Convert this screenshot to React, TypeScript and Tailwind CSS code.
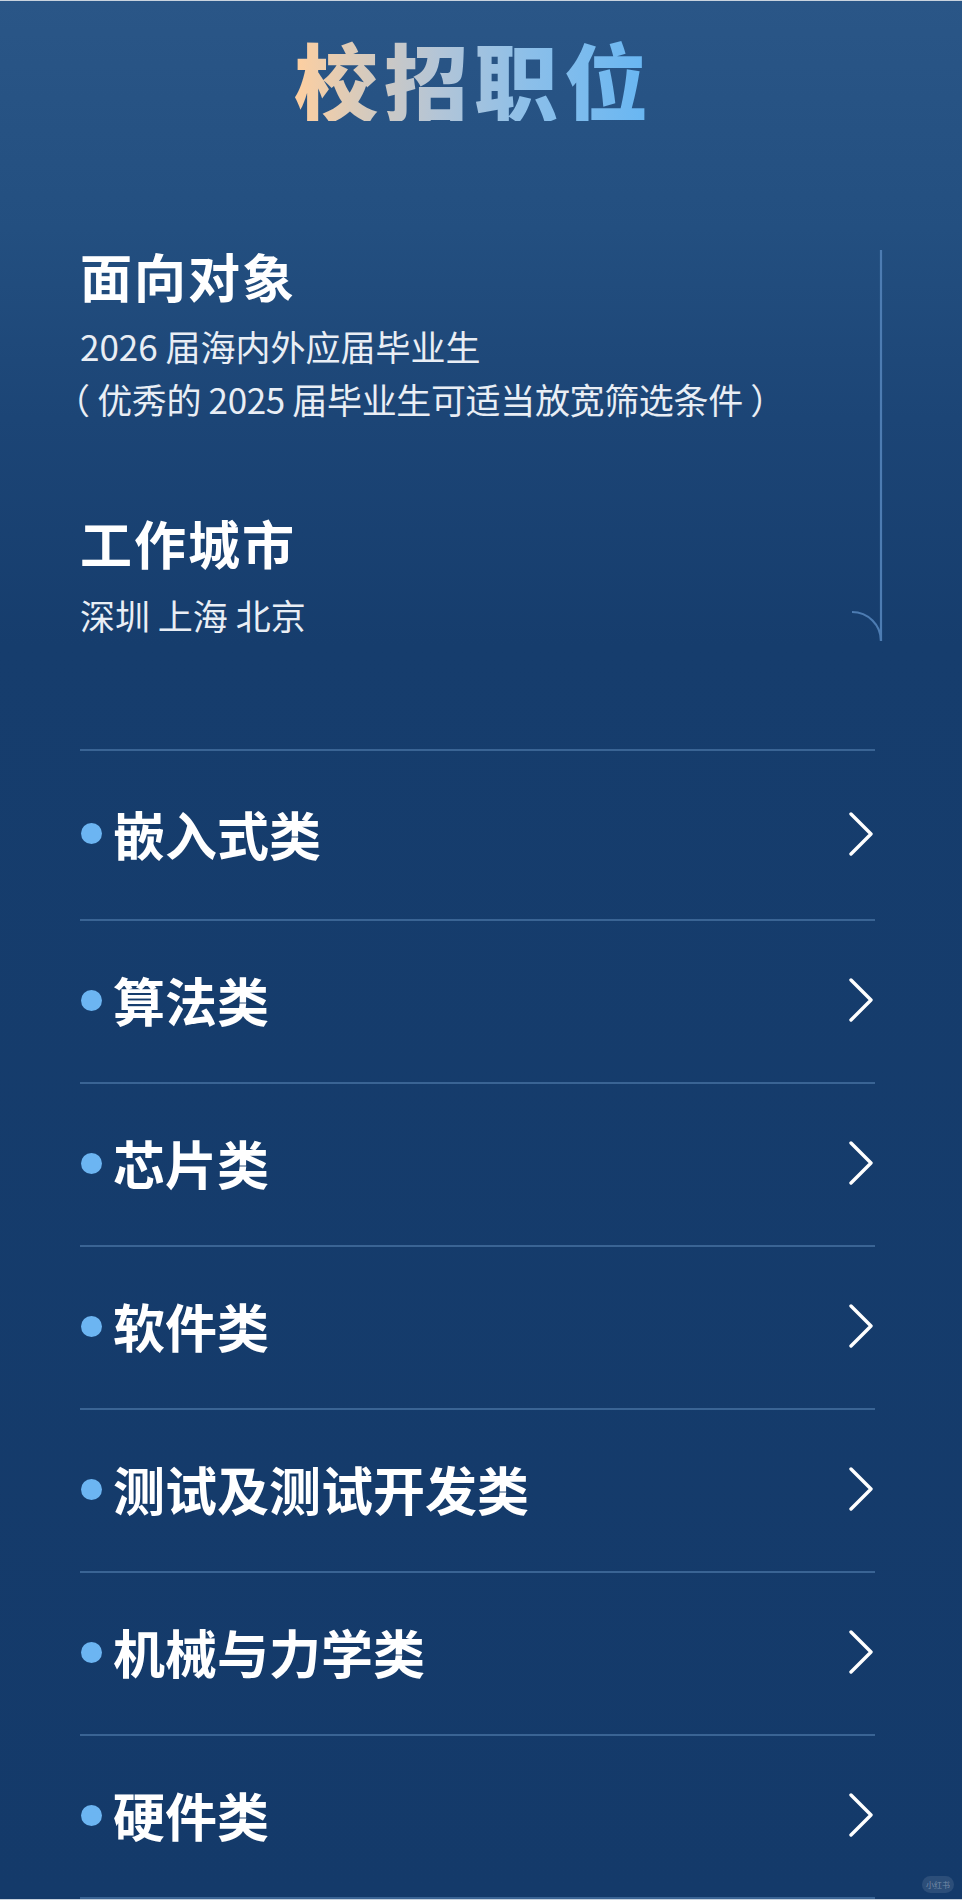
import React from "react";

const items = [
  "嵌入式类",
  "算法类",
  "芯片类",
  "软件类",
  "测试及测试开发类",
  "机械与力学类",
  "硬件类",
];

function Chevron() {
  return (
    <svg width="26" height="46" viewBox="0 0 26 46" fill="none" className="shrink-0">
      <polyline
        points="2,3 22,23 2,43"
        stroke="#ffffff"
        strokeWidth="3.4"
        strokeLinecap="round"
        strokeLinejoin="round"
      />
    </svg>
  );
}

export default function App() {
  return (
    <div className="relative w-[962px] h-[1900px] overflow-hidden flex flex-col font-['Noto_Sans_CJK_SC','Noto_Sans',sans-serif] bg-[linear-gradient(180deg,#2a5687_0%,#234f80_12%,#1c4576_22%,#163d6d_34%,#143a6a_100%)] text-white">
      <div className="h-px bg-[#c9d3de] shrink-0" />

      {/* Title */}
      <div className="flex justify-center pr-[14px] mt-[36px] shrink-0">
        <h1 className="text-[84px] leading-none font-black tracking-[6px] bg-[linear-gradient(90deg,#ffcf9f_0%,#d9cbbb_18%,#b3c5d7_40%,#8cbfe9_65%,#66b6f3_100%)] bg-clip-text text-transparent">
          校招职位
        </h1>
      </div>

      {/* Info sections */}
      <div className="flex flex-col pl-[80px] mt-[129px] shrink-0">
        <h2 className="text-[52px] leading-none font-bold tracking-[2px]">面向对象</h2>
        <div className="mt-[17px] text-[35px] leading-[53px] text-[#e9eef5]">
          <p>2026 届海内外应届毕业生</p>
          <p className="-ml-[25px] tracking-[-0.35px]">（ 优秀的 2025 届毕业生可适当放宽筛选条件 ）</p>
        </div>

        <h2 className="mt-[92px] text-[52px] leading-none font-bold tracking-[2px]">工作城市</h2>
        <p className="mt-[19px] text-[35px] leading-[53px] text-[#e9eef5]">深圳 上海 北京</p>
      </div>

      {/* Category list */}
      <div className="mt-[108px] ml-[80px] mr-[87px] flex flex-col shrink-0">
        <div className="h-[2px] bg-[#3a6494]" />
        {items.map((label, i) => (
          <React.Fragment key={label}>
            <div
              className={
                (i === 0 ? "h-[168px] " : "h-[161px] ") +
                "flex items-center justify-between pb-[3px]"
              }
            >
              <div className="flex items-center gap-[11px]">
                <span className="ml-[1px] w-[21px] h-[21px] rounded-full bg-[#6cb5f2]" />
                <span className="text-[52px] leading-none font-bold text-white">{label}</span>
              </div>
              <Chevron />
            </div>
            <div className="h-[2px] bg-[#3a6494]" />
          </React.Fragment>
        ))}
      </div>

      <div className="flex-1" />
      <div className="h-px bg-[#c9d3de] shrink-0" />

      {/* Decorative bracket line */}
      <svg
        className="absolute left-[840px] top-[245px]"
        width="50"
        height="400"
        viewBox="0 0 50 400"
        fill="none"
      >
        <line x1="41" y1="5" x2="41" y2="396" stroke="#4d7cb2" strokeWidth="2.2" />
        <path d="M12 367 A29 29 0 0 1 41 396" stroke="#4d7cb2" strokeWidth="2.2" />
      </svg>

      {/* Watermark */}
      <div className="absolute right-[8px] bottom-[7px] w-[32px] h-[17px] rounded-full bg-white/10 flex items-center justify-center text-[8px] leading-none text-white/35">
        小红书
      </div>
    </div>
  );
}
